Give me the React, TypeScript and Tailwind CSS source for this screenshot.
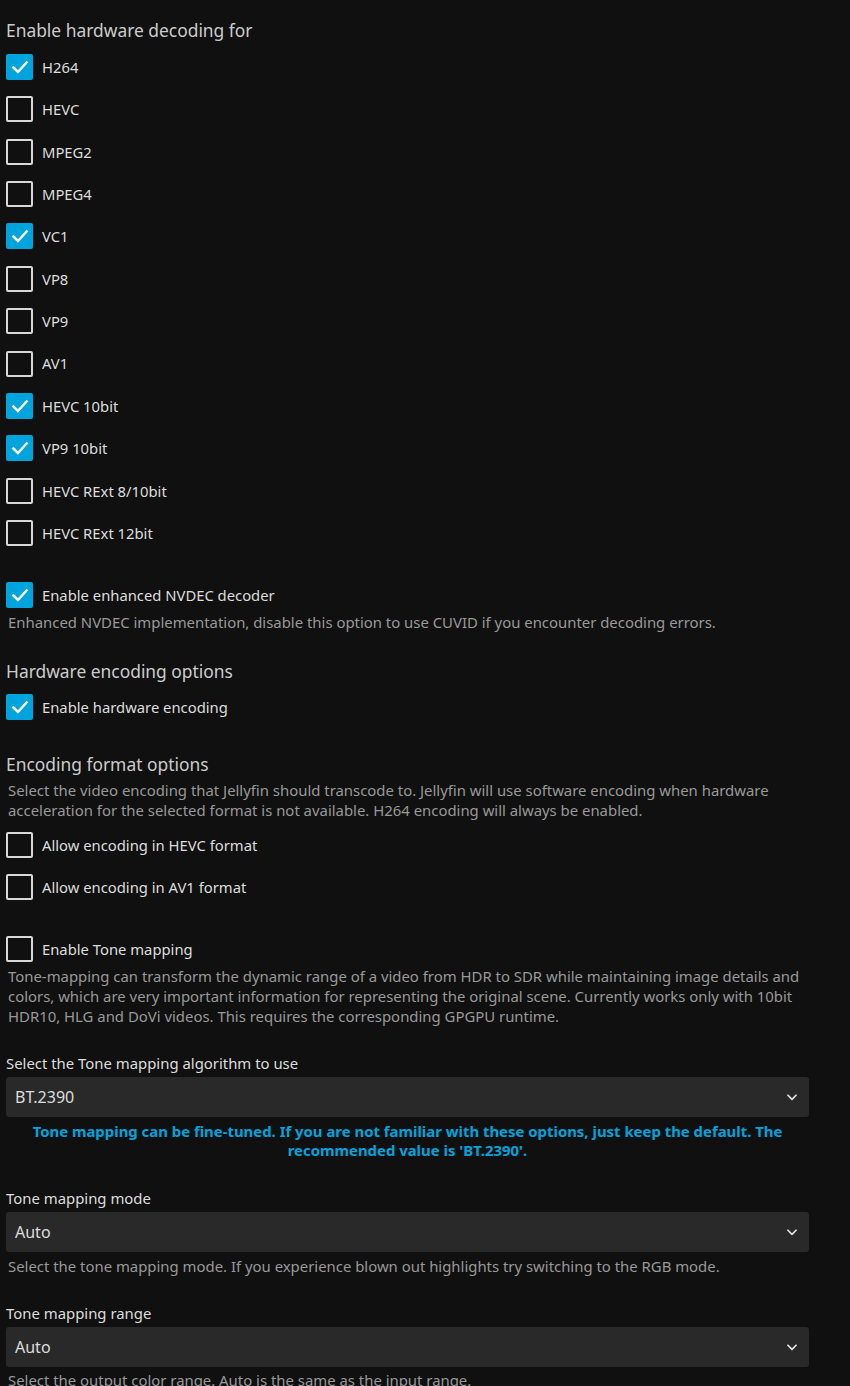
import React from "react";

const Check = ({ checked, label }: { checked?: boolean; label: string }) => (
  <div className="flex h-[28px] items-center">
    {checked ? (
      <div className="flex h-[26px] w-[27px] items-center justify-center rounded-[2px] bg-[#00a4dc]">
        <svg width="20" height="20" viewBox="0 0 24 24" fill="none" stroke="white" strokeWidth="3" strokeLinecap="square">
          <path d="M4 12.5 L9.5 18 L20 6.5" />
        </svg>
      </div>
    ) : (
      <div className="h-[26px] w-[27px] rounded-[2px] border-2 border-[#d8d8d8]" />
    )}
    <span className="ml-[9px] text-[14.8px] text-[#dddddd]">{label}</span>
  </div>
);

const Chevron = () => (
  <svg width="14" height="14" viewBox="0 0 24 24" fill="none" stroke="#e0e0e0" strokeWidth="3" strokeLinecap="round" strokeLinejoin="round">
    <path d="M5 9 L12 16 L19 9" />
  </svg>
);

const Select = ({ value }: { value: string }) => (
  <div className="flex h-[40px] items-center justify-between rounded-[3px] bg-[#292929] pl-[9px] pr-[10px]">
    <span className="text-[16px] text-[#dddddd]">{value}</span>
    <Chevron />
  </div>
);

const Heading = ({ children, className }: { children: React.ReactNode; className?: string }) => (
  <div className={"h-[24px] text-[17.4px] leading-[24px] text-[#cccccc] " + (className || "")}>{children}</div>
);

const Desc = ({ children, className }: { children: React.ReactNode; className?: string }) => (
  <div className={"pl-[2px] text-[14.9px] leading-[20px] text-[#999999] " + (className || "")}>{children}</div>
);

const Label = ({ children, className }: { children: React.ReactNode; className?: string }) => (
  <div className={"h-[20px] text-[14.9px] leading-[20px] text-[#dddddd] " + (className || "")}>{children}</div>
);

export default function App() {
  const codecs: [string, boolean][] = [
    ["H264", true],
    ["HEVC", false],
    ["MPEG2", false],
    ["MPEG4", false],
    ["VC1", true],
    ["VP8", false],
    ["VP9", false],
    ["AV1", false],
    ["HEVC 10bit", true],
    ["VP9 10bit", true],
    ["HEVC RExt 8/10bit", false],
    ["HEVC RExt 12bit", false],
  ];
  return (
    <div
      className="h-[1386px] w-[850px] overflow-hidden bg-[#101010]"
      style={{ fontFamily: '"Noto Sans", "Open Sans", sans-serif' }}
    >
      <div className="w-[809px] pl-[6px]">
        <Heading className="mt-[18px]">Enable hardware decoding for</Heading>
        <div className="mt-[11px] flex flex-col gap-[14.36px]">
          {codecs.map(([l, c]) => (
            <Check key={l} label={l} checked={c} />
          ))}
        </div>
        <div className="mt-[34px]">
          <Check label="Enable enhanced NVDEC decoder" checked />
        </div>
        <Desc className="mt-[3px]">
          Enhanced NVDEC implementation, disable this option to use CUVID if you encounter decoding errors.
        </Desc>
        <Heading className="mt-[27px]">Hardware encoding options</Heading>
        <div className="mt-[10px]">
          <Check label="Enable hardware encoding" checked />
        </div>
        <Heading className="mt-[31px]">Encoding format options</Heading>
        <Desc className="mt-[4px]">
          Select the video encoding that Jellyfin should transcode to. Jellyfin will use software encoding when hardware
          acceleration for the selected format is not available. H264 encoding will always be enabled.
        </Desc>
        <div className="mt-[11px] flex flex-col gap-[14px]">
          <Check label="Allow encoding in HEVC format" />
          <Check label="Allow encoding in AV1 format" />
        </div>
        <div className="mt-[34px]">
          <Check label="Enable Tone mapping" />
        </div>
        <Desc className="mt-[3px] leading-[20.5px]">
          Tone-mapping can transform the dynamic range of a video from HDR to SDR while maintaining image details and
          colors, which are very important information for representing the original scene. Currently works only with
          10bit HDR10, HLG and DoVi videos. This requires the corresponding GPGPU runtime.
        </Desc>
        <Label className="mt-[27px]">Select the Tone mapping algorithm to use</Label>
        <div className="mt-[4px]">
          <Select value="BT.2390" />
        </div>
        <div className="mt-[5px] text-center text-[14.9px] font-bold leading-[19.5px] text-[#00a4dc]">
          Tone mapping can be fine-tuned. If you are not familiar with these options, just keep the default. The
          recommended value is 'BT.2390'.
        </div>
        <Label className="mt-[27px]">Tone mapping mode</Label>
        <div className="mt-[4px]">
          <Select value="Auto" />
        </div>
        <Desc className="mt-[4px]">
          Select the tone mapping mode. If you experience blown out highlights try switching to the RGB mode.
        </Desc>
        <Label className="mt-[27px]">Tone mapping range</Label>
        <div className="mt-[4px]">
          <Select value="Auto" />
        </div>
        <Desc className="mt-[3px]">Select the output color range. Auto is the same as the input range.</Desc>
      </div>
    </div>
  );
}
